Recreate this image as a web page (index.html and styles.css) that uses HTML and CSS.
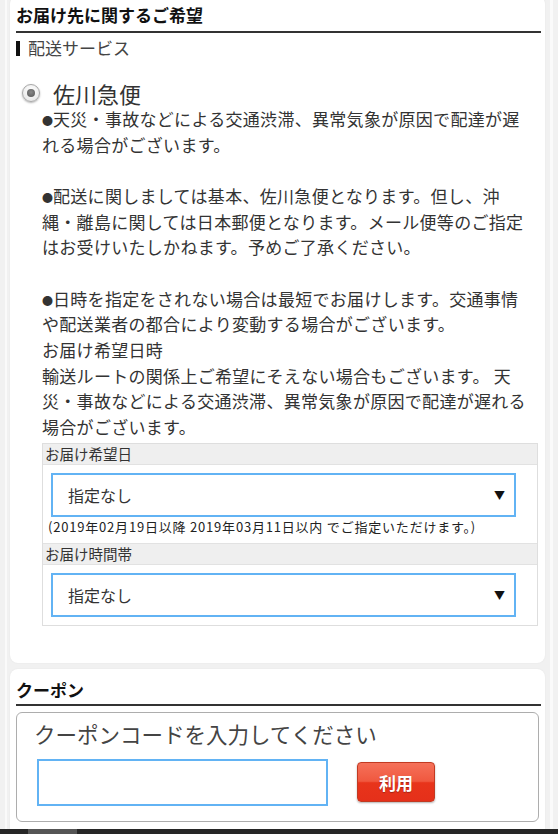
FILE: index.html
```html
<!DOCTYPE html>
<html lang="ja">
<head>
<meta charset="utf-8">
<link rel="stylesheet" href="styles.css">
</head>
<body>
<div class="frame">
  <section class="card card-first">
    <h2 class="sec-title">お届け先に関するご希望</h2>
    <div class="sub-title"><span class="bar"></span>配送サービス</div>
    <div class="radio-row">
      <span class="radio"><span class="dot"></span></span>
      <span class="radio-label">佐川急便</span>
    </div>
    <div class="notes">
      <span class="bullet">●</span>天災・事故などによる交通渋滞、異常気象が原因で配達が遅<br>
      れる場合がございます。<br>
      <br>
      <span class="bullet">●</span>配送に関しましては基本、佐川急便となります。但し、沖<br>
      縄・離島に関しては日本郵便となります。メール便等のご指定<br>
      はお受けいたしかねます。予めご了承ください。<br>
      <br>
      <span class="bullet">●</span>日時を指定をされない場合は最短でお届けします。交通事情<br>
      や配送業者の都合により変動する場合がございます。<br>
      お届け希望日時<br>
      輸送ルートの関係上ご希望にそえない場合もございます。 天<br>
      災・事故などによる交通渋滞、異常気象が原因で配達が遅れる<br>
      場合がございます。
    </div>
    <div class="form-box">
      <div class="form-head">お届け希望日</div>
      <div class="form-body">
        <div class="select"><span>指定なし</span><span class="arrow">▼</span></div>
        <div class="hint">(2019年02月19日以降 2019年03月11日以内 でご指定いただけます。)</div>
      </div>
      <div class="form-head">お届け時間帯</div>
      <div class="form-body form-body-last">
        <div class="select"><span>指定なし</span><span class="arrow">▼</span></div>
      </div>
    </div>
  </section>
  <section class="card card-second">
    <h2 class="sec-title coupon-title">クーポン</h2>
    <div class="coupon-box">
      <div class="coupon-label">クーポンコードを入力してください</div>
      <div class="coupon-row">
        <div class="coupon-input"></div>
        <button class="use-btn" type="button">利用</button>
      </div>
    </div>
  </section>
</div>
<div class="toolbar"><span class="toolbar-seg"></span></div>
</body>
</html>
```
FILE: styles.css
```css
html, body {
  margin: 0;
  padding: 0;
}
body {
  background: #f1f1f1;
  font-family: "Noto Sans CJK JP", "Noto Sans", sans-serif;
  color: #333;
  overflow: hidden;
}
.frame {
  margin: 0 5px;
  border-left: 2px solid #fafafa;
  border-right: 3px solid #fafafa;
  padding: 0 5px 0 3px;
}
.card {
  background: #fff;
  border-radius: 8px;
  padding: 0 4px 0 6px;
  box-shadow: 0 0 2px rgba(0,0,0,0.06);
}
.card-first {
  margin-top: -4px;
  padding-top: 6px;
  padding-bottom: 37px;
}
.card-second {
  margin-top: 6px;
  padding-top: 8px;
  padding-bottom: 20px;
}
.sec-title {
  margin: 0;
  font-size: 17px;
  font-weight: bold;
  line-height: 26px;
  color: #111;
  padding-bottom: 3px;
  border-bottom: 2px solid #333;
}
.coupon-title {
  line-height: 25px;
  padding-bottom: 2px;
}
.sub-title {
  display: flex;
  align-items: center;
  margin-top: 5px;
  font-size: 17px;
  line-height: 20px;
  color: #444;
}
.bar {
  width: 4px;
  height: 15px;
  background: #111;
  margin-right: 8px;
}
.radio-row {
  display: flex;
  align-items: center;
  margin-top: 22px;
  height: 26px;
}
.radio {
  margin-left: 6px;
  width: 16px;
  height: 16px;
  border: 1px solid #a8a8a8;
  border-radius: 50%;
  background: radial-gradient(circle at 50% 35%, #ffffff 0%, #e2e2e2 100%);
  box-shadow: 0 1px 2px rgba(0,0,0,0.3);
  display: flex;
  align-items: center;
  justify-content: center;
}
.dot {
  width: 8px;
  height: 8px;
  border-radius: 50%;
  background: radial-gradient(circle at 50% 40%, #888 0%, #555 100%);
}
.radio-label {
  margin-left: 13px;
  font-size: 22px;
  line-height: 26px;
  color: #333;
}
.notes {
  margin-left: 26px;
  font-size: 17px;
  letter-spacing: 0.3px;
  line-height: 25.67px;
  color: #333;
  white-space: nowrap;
}
.bullet {
  font-size: 11px;
  line-height: 0;
  letter-spacing: 0;
  vertical-align: 1px;
}
.form-box {
  margin: 3px 3px 0 26px;
  border: 1px solid #dedede;
}
.form-head {
  background: #efefef;
  font-size: 14.5px;
  line-height: 20px;
  padding-left: 2px;
  color: #333;
  border-bottom: 1px solid #e2e2e2;
}
.form-body {
  padding: 8px 21px 6px 8px;
  border-bottom: 1px solid #e2e2e2;
}
.form-body-last {
  padding-bottom: 8px;
  border-bottom: 0;
}
.select {
  height: 40px;
  border: 2px solid #62b3f4;
  display: flex;
  align-items: center;
  justify-content: space-between;
  padding: 0 9px 0 15px;
  font-size: 16px;
  color: #333;
}
.arrow {
  font-size: 11px;
  color: #111;
}
.hint {
  font-size: 13px;
  letter-spacing: 0.8px;
  line-height: 20px;
  margin-left: -3px;
  color: #222;
  white-space: nowrap;
}
.coupon-box {
  margin-top: 6px;
  margin-right: 2px;
  border: 1px solid #adadad;
  border-radius: 6px;
  padding: 6px 0 15px 20px;
}
.coupon-label {
  margin-left: -3px;
  font-size: 21.5px;
  line-height: 30px;
  color: #444;
}
.coupon-row {
  display: flex;
  align-items: center;
  margin-top: 10px;
}
.coupon-input {
  width: 287px;
  height: 43px;
  border: 2px solid #62b3f4;
}
.use-btn {
  margin-left: 29px;
  width: 78px;
  height: 40px;
  border: 1px solid #c23a22;
  border-radius: 4px;
  background: linear-gradient(to bottom, #f5715a 0%, #f0583f 48%, #e8341b 52%, #e5301a 100%);
  color: #fff;
  font-family: "Noto Sans CJK JP", sans-serif;
  font-size: 17px;
  font-weight: bold;
  text-shadow: 0 1px 1px rgba(0,0,0,0.3);
  box-shadow: 0 1px 2px rgba(0,0,0,0.3);
  padding: 0;
}
.toolbar {
  position: fixed;
  left: 0;
  right: 0;
  bottom: 0;
  height: 5px;
  background: #262626;
}
.toolbar-seg {
  display: block;
  margin-left: 28px;
  width: 49px;
  height: 5px;
  background: #555;
}
```
